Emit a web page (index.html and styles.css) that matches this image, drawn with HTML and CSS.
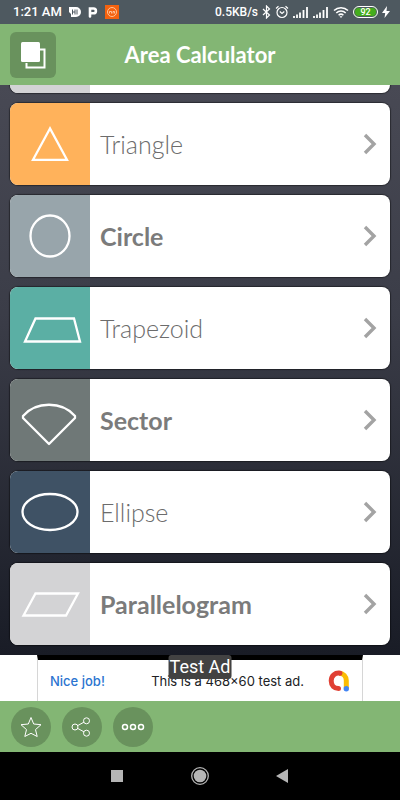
FILE: index.html
```html
<!DOCTYPE html>
<html lang="en">
<head>
<meta charset="utf-8">
<meta name="viewport" content="width=device-width, initial-scale=1">
<title>Area Calculator</title>
<link rel="stylesheet" href="styles.css">
</head>
<body>
<div class="app">
  <div class="status">
    <div class="status-group">
      <span class="clock">1:21 AM</span>
      <svg width="12" height="12" viewBox="0 0 12 12"><path d="M0 1h7a5 5 0 0 1 0 10H2V8L0 6z" fill="#fff"/><path d="M3.500 3.500v5M6 3.500v5M3.500 6H6M8 3.500v5" stroke="#4e5960" fill="none"/></svg>
      <svg width="10" height="12" viewBox="0 0 10 12"><path d="M2 10.500V2.500H5.500a2.300 2.300 0 0 1 0 4.800H4" stroke="#fff" stroke-width="2.600" stroke-linecap="round" fill="none"/></svg>
      <svg width="14" height="14" viewBox="0 0 14 14"><path d="M0 0h14v14H0z" fill="#f4620f"/><circle cx="7" cy="7" r="4.500" fill="none" stroke="#ffc49a"/><path d="M4.500 8.500v-2h2v2M8 8.500v-2h1.500v2" fill="none" stroke="#ffd9bd" stroke-width=".8"/></svg>
    </div>
    <div class="status-group status-right">
      <span class="speed">0.5KB/s</span>
      <svg width="9" height="14" viewBox="0 0 9 14"><path d="M1 4l6.500 6L4.500 13V1l3 3L1 10" fill="none" stroke="#fff" stroke-width="1.200"/></svg>
      <svg width="14" height="14" viewBox="0 0 14 14"><circle cx="7" cy="7.500" r="5" fill="none" stroke="#fff" stroke-width="1.200"/><path d="M1 3.500L3.500 1.300M13 3.500L10.500 1.300M4.800 6.500L7 8.500L9.300 6.500" fill="none" stroke="#fff" stroke-width="1.200"/></svg>
      <svg width="16" height="12" viewBox="0 0 16 12"><path d="M1 12v-2M4 12V8.500M7 12V6.500M10.500 12V4M14 12V1" stroke="#fff" stroke-width="1.800"/></svg>
      <svg width="16" height="12" viewBox="0 0 16 12"><path d="M1 12v-2M4 12V8.500M7 12V6.500M10.500 12V4M14 12V1" stroke="#fff" stroke-width="1.800"/></svg>
      <svg width="16" height="12" viewBox="0 0 16 12"><path d="M1 4.500a10 10 0 0 1 14 0M3.300 7a6.600 6.600 0 0 1 9.400 0M5.600 9.300a3.400 3.400 0 0 1 4.800 0" fill="none" stroke="#fff" stroke-width="1.500"/><path d="M6.500 10.300h3L8 12z" fill="#fff"/></svg>
      <span class="battery">92</span>
      <svg width="8" height="12" viewBox="0 0 8 12"><path d="M5 0L0 7h3.200L2.500 12L8 5H4.500z" fill="#fff"/></svg>
    </div>
  </div>

  <header class="header">
    <button class="square-btn" type="button" aria-label="Windows">
      <svg width="26" height="28" viewBox="0 0 26 28"><path d="M20 8.500h4.500v18h-18V22" fill="none" stroke="#fff" stroke-width="2"/><rect x="1" y="1" width="19" height="20" rx="1.500" fill="#fff"/></svg>
    </button>
    <h1 class="title">Area Calculator</h1>
  </header>

  <main class="list">
    <a class="card" href="#rectangle" aria-label="Previous shape"><span class="tile silver"></span></a>
    <a class="card" href="#triangle">
      <span class="tile orange"><svg width="60" height="50" viewBox="0 0 60 50"><path d="M30 9.500L13 40.800H47z"/></svg></span>
      <span class="name light">Triangle</span>
      <svg class="chevron" width="14" height="22" viewBox="0 0 14 22"><path d="M2 2l9 9-9 9"/></svg>
    </a>
    <a class="card" href="#circle">
      <span class="tile gray"><svg width="60" height="50" viewBox="0 0 60 50"><ellipse cx="30" cy="25" rx="19.500" ry="20.500"/></svg></span>
      <span class="name">Circle</span>
      <svg class="chevron" width="14" height="22" viewBox="0 0 14 22"><path d="M2 2l9 9-9 9"/></svg>
    </a>
    <a class="card" href="#trapezoid">
      <span class="tile teal"><svg width="60" height="50" viewBox="0 0 60 50"><path d="M15.500 15.500H54L60 38.500H5z"/></svg></span>
      <span class="name light">Trapezoid</span>
      <svg class="chevron" width="14" height="22" viewBox="0 0 14 22"><path d="M2 2l9 9-9 9"/></svg>
    </a>
    <a class="card" href="#sector">
      <span class="tile slate"><svg width="60" height="50" viewBox="0 0 60 50"><path d="M3 21C16 6 42 6 55 21V23L29 49L3 23z" stroke-linejoin="round"/></svg></span>
      <span class="name">Sector</span>
      <svg class="chevron" width="14" height="22" viewBox="0 0 14 22"><path d="M2 2l9 9-9 9"/></svg>
    </a>
    <a class="card" href="#ellipse">
      <span class="tile navy"><svg width="60" height="50" viewBox="0 0 60 50"><ellipse cx="30" cy="25" rx="27.500" ry="18"/></svg></span>
      <span class="name light">Ellipse</span>
      <svg class="chevron" width="14" height="22" viewBox="0 0 14 22"><path d="M2 2l9 9-9 9"/></svg>
    </a>
    <a class="card" href="#parallelogram">
      <span class="tile silver"><svg width="60" height="50" viewBox="0 0 60 50"><path d="M15.500 14.500H58L46 36.500H3.500z"/></svg></span>
      <span class="name">Parallelogram</span>
      <svg class="chevron" width="14" height="22" viewBox="0 0 14 22"><path d="M2 2l9 9-9 9"/></svg>
    </a>
  </main>

  <aside class="ad">
    <a class="banner" href="#ad">
      <span class="ad-lead">Nice job!</span>
      <span class="ad-text">This is a 468x60 test ad.</span>
      <svg class="ad-logo" width="22" height="22" viewBox="0 0 22 22" fill="none"><path d="M11 3.200C15.500 3.200 18.300 6.500 18.300 10.500V18" stroke="#fbbc04" stroke-width="5"/><path d="M12 3.200C7 2.500 3.200 6 3.200 10.800C3.200 15.500 6.500 18.500 10.500 18.500" stroke="#e04034" stroke-width="5" stroke-linecap="round"/><circle cx="18.300" cy="18.700" r="2.700" fill="#4285f4"/></svg>
    </a>
    <span class="ad-tag">Test Ad</span>
  </aside>

  <footer class="toolbar">
    <button class="round-btn" type="button" aria-label="Rate">
      <svg width="24" height="24" viewBox="0 0 24 24"><path d="M12 2.500L14.700 9L22 9.700L16.500 14.600L18.200 21.500L12 18.300L5.800 21.500L7.500 14.600L2 9.700L9.300 9z"/></svg>
    </button>
    <button class="round-btn" type="button" aria-label="Share">
      <svg width="24" height="24" viewBox="0 0 24 24"><circle cx="5" cy="12" r="3"/><circle cx="16.500" cy="5.800" r="3"/><circle cx="16.500" cy="18.200" r="3"/><path d="M7.700 10.600l6.200-3.400M7.700 13.400l6.200 3.400"/></svg>
    </button>
    <button class="round-btn" type="button" aria-label="More">
      <svg width="24" height="24" viewBox="0 0 24 24" stroke-width="1.500"><circle cx="4" cy="12" r="2.500"/><circle cx="12" cy="12" r="2.500"/><circle cx="20" cy="12" r="2.500"/></svg>
    </button>
  </footer>

  <nav class="nav">
    <button class="nav-btn" type="button" aria-label="Recent apps"><svg width="20" height="20" viewBox="0 0 20 20"><path d="M3 4h12v12H3z" fill="#b5b5b5"/></svg></button>
    <button class="nav-btn" type="button" aria-label="Home"><svg width="20" height="20" viewBox="0 0 20 20"><circle cx="10" cy="10" r="6.300" fill="#b5b5b5"/><circle cx="10" cy="10" r="8.300" fill="none" stroke="#b5b5b5" stroke-width="1.300"/></svg></button>
    <button class="nav-btn" type="button" aria-label="Back"><svg width="20" height="20" viewBox="0 0 20 20"><path d="M16 3v14L4 10z" fill="#b5b5b5"/></svg></button>
  </nav>
</div>
</body>
</html>
```
FILE: styles.css
```css
* { box-sizing: border-box; }
body { margin: 0; font-family: Lato, "Liberation Sans", sans-serif; }
button { border: 0; padding: 0; cursor: pointer; }
a { color: inherit; text-decoration: none; }
svg { display: block; flex: none; }

.app { display: flex; flex-direction: column; height: 100vh; background: #000; }

.status {
  display: flex;
  flex: none;
  justify-content: space-between;
  align-items: center;
  height: 24px;
  padding: 0 10px 0 13px;
  background: #4e5960;
  color: #fff;
  font: 500 12px/24px Roboto, sans-serif;
}
.status-group { display: flex; align-items: center; gap: 7px; }
.status-right { gap: 4px; }
.clock { font-size: 13px; }
.battery {
  width: 25px;
  height: 12px;
  border: 1px solid #fff;
  border-radius: 6px;
  background: #44ad1c;
  box-shadow: inset 0 0 0 1px #4e5960;
  font-size: 9px;
  line-height: 10px;
  text-align: center;
}

.header {
  display: grid;
  flex: none;
  grid-template-columns: 46px 1fr 46px;
  align-items: center;
  height: 61px;
  padding: 0 10px;
  background: #83b674;
}
.square-btn {
  display: grid;
  place-items: center;
  width: 46px;
  height: 46px;
  border-radius: 6px;
  background: #69925d;
}
.title {
  margin: 0;
  color: #fff;
  font-size: 22px;
  font-weight: 700;
  line-height: 28px;
  text-align: center;
}

.list {
  display: flex;
  flex: 1;
  flex-direction: column;
  justify-content: flex-end;
  gap: 10px;
  min-height: 0;
  overflow: hidden;
  padding: 0 10px 10px;
  background: linear-gradient(#484954, #3b3d48 40%, #191c26);
}
.card {
  display: flex;
  flex: none;
  align-items: center;
  height: 82px;
  padding-right: 13px;
  overflow: hidden;
  border-radius: 8px;
  background: #fff;
  box-shadow: 0 0 1px 1px rgba(0, 0, 0, .4);
}
.tile { display: grid; flex: none; place-items: center; align-self: stretch; width: 80px; }
.tile svg { overflow: visible; fill: none; stroke: #fff; stroke-width: 2.300; }
.orange { background: #ffb25b; }
.gray { background: #98a5ab; }
.teal { background: #5bafa4; }
.slate { background: #6f7877; }
.navy { background: #3f5265; }
.silver { background: #d3d3d5; }
.name { flex: 1; padding-left: 10px; color: #7b7b7b; font-size: 25px; font-weight: 700; line-height: 32px; }
.light { color: #6c6c6c; font-weight: 300; }
.chevron { fill: none; stroke: #a3a3a3; stroke-width: 3.400; }

.ad { position: relative; display: flex; flex: none; justify-content: center; height: 46px; background: #fff; }
.banner {
  display: flex;
  align-items: center;
  width: 326px;
  padding: 0 12px;
  border: 1px solid #d6d6d6;
  border-top: 5px solid #000;
  border-bottom: 0;
  color: #202124;
  font: 400 13px/20px Inter, sans-serif;
}
.ad-lead { color: #2b74d0; font-weight: 500; }
.ad-text { flex: 1; padding-right: 24px; text-align: right; white-space: nowrap; }
.ad-tag {
  position: absolute;
  top: 0;
  left: 50%;
  transform: translateX(-50%);
  padding: 0 1px;
  border-radius: 3px;
  background: #424242;
  color: #fff;
  font: 400 18px/24px Roboto, sans-serif;
  white-space: nowrap;
}

.toolbar { display: flex; flex: none; align-items: center; gap: 11px; height: 51px; padding: 0 11px; background: #83b674; }
.round-btn { display: grid; place-items: center; width: 40px; height: 40px; border-radius: 50%; background: #69925d; }
.round-btn svg { fill: none; stroke: #fff; }

.nav { display: flex; flex: none; justify-content: center; align-items: center; gap: 62px; height: 48px; background: #000; }
.nav-btn { width: 20px; height: 20px; background: none; }
```
